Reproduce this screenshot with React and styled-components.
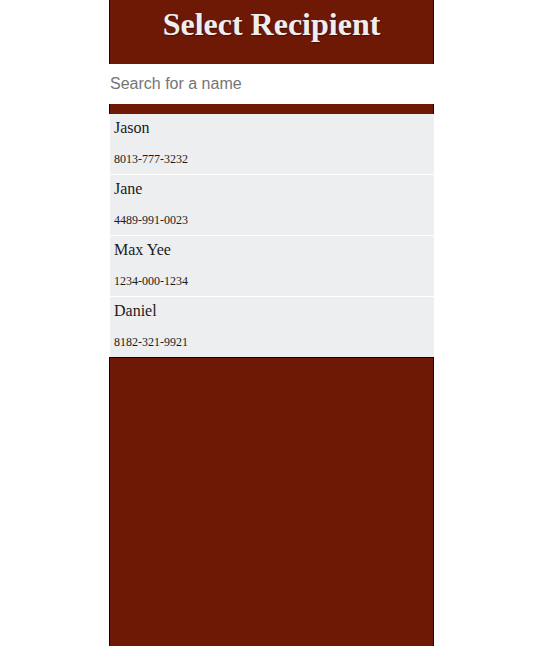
import React, { useState } from "react";
import styled, { createGlobalStyle } from "styled-components";

const GlobalStyle = createGlobalStyle`
  body {
    margin: 0;
    background: #fff;
    font-family: "Liberation Serif", "Times New Roman", serif;
  }
`;

const Page = styled.div`
  width: 325px;
  margin-left: 109px;
  display: flex;
  flex-direction: column;
  height: 646px;
  overflow: hidden;
`;

const Header = styled.div`
  height: 64px;
  box-sizing: border-box;
  padding-top: 4px;
  background-color: #6e1906;
  border-left: 1px solid #1a0500;
  border-right: 1px solid #1a0500;
  display: flex;
  justify-content: center;
`;

const Title = styled.h1`
  margin: 0;
  font-size: 32px;
  line-height: 40px;
  font-weight: bold;
  color: #eeeeef;
  text-shadow: 1px 1px 1px rgba(0, 0, 0, 0.4);
`;

const Search = styled.input`
  height: 40px;
  border: none;
  padding: 0 1px;
  font-family: "Liberation Sans", Arial, sans-serif;
  font-size: 16px;
  background: #fff;
  outline: none;
  &::placeholder {
    color: #757575;
  }
`;

const Divider = styled.div`
  height: 10px;
  background-color: #6e1906;
  border-left: 1px solid #1a0500;
  border-right: 1px solid #1a0500;
`;

const List = styled.div`
  display: flex;
  flex-direction: column;
  gap: 1px;
  padding-left: 1px;
`;

const Item = styled.div`
  height: 60px;
  background-color: #edeef0;
  padding-left: 4px;
  color: #1b1b1b;
  cursor: pointer;
`;

const Name = styled.div`
  font-size: 16px;
  padding-top: 5px;
  line-height: 18px;
`;

const Phone = styled.div`
  font-size: 12px;
  margin-top: 15px;
  line-height: 14px;
`;

const Panel = styled.div`
  flex: 1;
  background-color: #6e1906;
  border: 1px solid #0e0200;
  border-bottom: none;
`;

const contacts = [
  { name: "Jason", phone: "8013-777-3232" },
  { name: "Jane", phone: "4489-991-0023" },
  { name: "Max Yee", phone: "1234-000-1234" },
  { name: "Daniel", phone: "8182-321-9921" },
];

function App() {
  const [query, setQuery] = useState("");

  const shown = contacts.filter((c) =>
    c.name.toLowerCase().includes(query.toLowerCase())
  );

  return (
    <>
      <GlobalStyle />
      <Page>
        <Header>
          <Title>Select Recipient</Title>
        </Header>
        <Search
          placeholder="Search for a name"
          value={query}
          onChange={(e) => setQuery(e.target.value)}
        />
        <Divider />
        <List>
          {shown.map((c) => (
            <Item key={c.phone}>
              <Name>{c.name}</Name>
              <Phone>{c.phone}</Phone>
            </Item>
          ))}
        </List>
        <Panel />
      </Page>
    </>
  );
}

export default App;
